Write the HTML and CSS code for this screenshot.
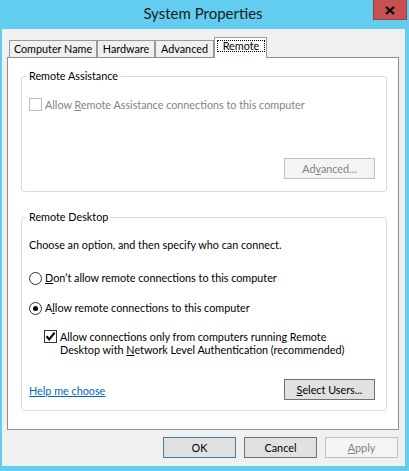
FILE: index.html
```html
<!DOCTYPE html>
<html lang="en">
<head>
<meta charset="utf-8">
<title>System Properties</title>
<link rel="stylesheet" href="styles.css">
</head>
<body>
<div class="window">
  <div class="titlebar">
    <div class="title">System Properties</div>
    <div class="close">
      <svg width="10" height="9" viewBox="0 0 10 9"><path d="M1 1 L9 8 M9 1 L1 8" stroke="#000" stroke-width="2.3" fill="none"/></svg>
    </div>
  </div>
  <div class="client">
    <div class="tabs">
      <div class="tab tab-name">Computer Name</div>
      <div class="tab tab-hw">Hardware</div>
      <div class="tab tab-adv">Advanced</div>
      <div class="tab tab-sel"><span class="focus">Remote</span></div>
    </div>
    <div class="panel">
      <div class="group group-ra">
        <div class="group-title">Remote Assistance</div>
        <div class="opt opt-ra disabled">
          <span class="check check-off"></span>
          <span class="lbl">Allow <u>R</u>emote Assistance connections to this computer</span>
        </div>
        <div class="btn-row">
          <div class="btn wide disabled">Ad<u>v</u>anced...</div>
        </div>
      </div>
      <div class="group group-rd">
        <div class="group-title">Remote Desktop</div>
        <div class="choose">Choose an option, and then specify who can connect.</div>
        <div class="opt opt-r1">
          <span class="radio"></span>
          <span class="lbl"><u>D</u>on&#8217;t allow remote connections to this computer</span>
        </div>
        <div class="opt opt-r2">
          <span class="radio"><span class="dot"></span></span>
          <span class="lbl">A<u>l</u>low remote connections to this computer</span>
        </div>
        <div class="opt opt-nla">
          <span class="check">
            <svg width="11" height="11" viewBox="0 0 11 11"><path d="M1.5 5.2 L4.2 8.3 L9.6 1.6" stroke="#000" stroke-width="2.1" fill="none"/></svg>
          </span>
          <span class="lbl">Allow connections only from computers running Remote<br>Desktop with <u>N</u>etwork Level Authentication (recommended)</span>
        </div>
        <div class="bottom-row">
          <span class="help">Help me choose</span>
          <div class="btn wide"><u>S</u>elect Users...</div>
        </div>
      </div>
    </div>
    <div class="footer">
      <div class="btn default">OK</div>
      <div class="btn">Cancel</div>
      <div class="btn disabled"><u>A</u>pply</div>
    </div>
  </div>
</div>
</body>
</html>
```
FILE: styles.css
```css
* { box-sizing: border-box; }
html, body { margin: 0; padding: 0; }
body {
  width: 409px;
  height: 471px;
  overflow: hidden;
  font-family: Lato, "Liberation Sans", sans-serif;
  font-size: 10.8px;
  color: #000;
}
.window {
  width: 409px;
  height: 471px;
  background: #62cdef;
  display: flex;
  flex-direction: column;
}
.titlebar {
  height: 29px;
  flex: none;
  display: grid;
}
.title, .close { grid-area: 1 / 1; }
.title {
  justify-self: center;
  padding-top: 4px;
  margin-right: 3px;
  font-size: 15px;
  line-height: 18px;
  color: #1b1b1b;
}
.close {
  justify-self: end;
  align-self: start;
  width: 34px;
  height: 20px;
  margin-right: 2px;
  padding-top: 1px;
  background: #c75050;
  border: 1px solid #9b3f3f;
  border-top: none;
  display: flex;
  align-items: center;
  justify-content: center;
}
.close svg { display: block; }
.client {
  flex: 1;
  margin: 0 4px 5px 2px;
  background: #f0f0f0;
  display: flex;
  flex-direction: column;
}
.tabs {
  height: 20px;
  margin-top: 8px;
  padding-left: 7px;
  display: flex;
  align-items: flex-end;
  flex: none;
}
.tab {
  height: 17px;
  border: 1px solid #999;
  border-bottom: none;
  background: #f0f0f0;
  text-align: center;
  padding-top: 1px;
  line-height: 13px;
  white-space: nowrap;
}
.tab-name { width: 88px; }
.tab-hw { width: 58px; }
.tab-adv { width: 59px; }
.tab-sel {
  width: 53px;
  height: 21px;
  margin-bottom: -1px;
  background: #fff;
  position: relative;
  z-index: 1;
  padding: 2px 1px 0 2px;
}
.focus {
  display: block;
  height: 12px;
  border: 1px dotted #000;
  line-height: 10px;
  text-align: center;
}
.panel {
  flex: none;
  height: 373px;
  margin: 0 6px 0 5px;
  border: 1px solid #8f8f8f;
  background: #fff;
  padding: 18px 11px 0 13px;
}
.group {
  border: 1px solid #d5dfe5;
  border-radius: 3px;
  padding: 0 11px 0 7px;
}
.group-ra { height: 116px; }
.group-rd { height: 194px; margin-top: 25px; }
.group-title {
  width: fit-content;
  height: 14px;
  line-height: 14px;
  margin: -8px 0 0 -2px;
  padding: 0 2px;
  background: #fff;
}
.opt {
  display: flex;
  align-items: flex-start;
  line-height: 13px;
  white-space: nowrap;
}
.disabled { color: #838383; }
.check {
  flex: none;
  width: 13px;
  height: 13px;
  border: 1px solid #333;
  background: #fff;
  margin-right: 3px;
}
.check svg { display: block; }
.check-off { border-color: #bcbcbc; }
.radio {
  flex: none;
  width: 13px;
  height: 13px;
  margin-top: 1px;
  margin-right: 3px;
  border: 1px solid #333;
  border-radius: 50%;
  background: #fff;
  display: flex;
  align-items: center;
  justify-content: center;
}
.dot {
  width: 5px;
  height: 5px;
  border-radius: 50%;
  background: #000;
}
.opt-ra { margin-top: 15px; }
.btn-row {
  margin-top: 47px;
  display: flex;
  justify-content: flex-end;
}
.choose { margin-top: 14px; line-height: 13px; }
.opt-r1 { margin-top: 20px; }
.opt-r2 { margin-top: 16px; }
.opt-nla { margin-top: 15px; padding-left: 15px; }
.bottom-row {
  margin-top: 23px;
  display: flex;
  justify-content: space-between;
  align-items: flex-end;
}
.help {
  color: #0066cc;
  text-decoration: underline;
  line-height: 13px;
  margin-bottom: 3px;
}
.footer {
  flex: none;
  display: flex;
  justify-content: flex-end;
  gap: 8px;
  margin: 7px 7px 0 0;
}
.btn {
  width: 73px;
  height: 21px;
  border: 1px solid #707070;
  background: #e1e1e1;
  line-height: 19px;
  text-align: center;
  white-space: nowrap;
}
.btn.wide { width: 91px; }
.btn.default { border-color: #3c7fb1; }
.btn.disabled {
  border-color: #bfbfbf;
  background: #f4f4f4;
  color: #838383;
}
```
